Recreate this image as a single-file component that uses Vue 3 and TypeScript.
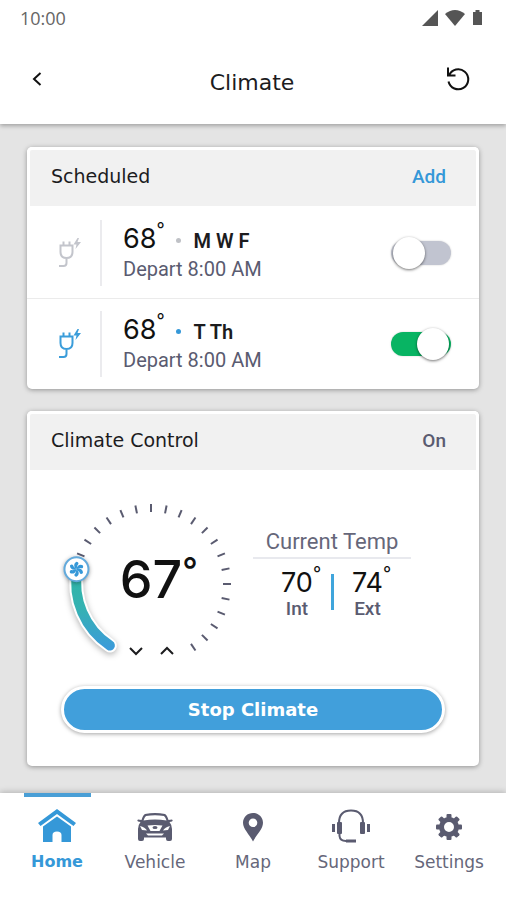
<script setup lang="ts">
import { ref, computed } from 'vue'

interface Schedule {
  id: number
  temp: number
  days: string
  depart: string
  on: boolean
}

const schedules = ref<Schedule[]>([
  { id: 1, temp: 68, days: 'M W F', depart: '8:00 AM', on: false },
  { id: 2, temp: 68, days: 'T Th', depart: '8:00 AM', on: true },
])

const running = ref(true)

// The dial has 27 stops, 11.25 degrees apart, from the lower left to the lower right.
const STEP = 11.25
const START = -146.25
const MIN_TEMP = 61
const MAX_TEMP = 87
const target = ref(67)

const cx = 90
const cy = 88

function polar(angle: number, radius: number) {
  const a = (angle * Math.PI) / 180
  return { x: cx + radius * Math.sin(a), y: cy - radius * Math.cos(a) }
}

const knobAngle = computed(() => START + (target.value - MIN_TEMP) * STEP)
const knob = computed(() => polar(knobAngle.value, 76))

const ticks = computed(() => {
  const list = []
  for (let t = target.value + 1; t <= MAX_TEMP; t++) {
    const a = START + (t - MIN_TEMP) * STEP
    const p = polar(a, 72)
    const q = polar(a, 80)
    list.push({ t, x1: p.x, y1: p.y, x2: q.x, y2: q.y })
  }
  return list
})

const arc = computed(() => {
  const s = polar(START, 74)
  const e = polar(knobAngle.value, 75)
  const large = knobAngle.value - START > 180 ? 1 : 0
  return `M${s.x} ${s.y}A75 75 0 ${large} 1 ${e.x} ${e.y}`
})

function change(by: number) {
  target.value = Math.min(MAX_TEMP, Math.max(MIN_TEMP, target.value + by))
}

const teeth = [0, 45, 90, 135, 180, 225, 270, 315]
const blades = [0, 60, 120, 180, 240, 300]
</script>

<template>
  <div class="app">
    <header class="top">
      <div class="status">
        <span>10:00</span>
        <svg class="signals" viewBox="0 0 62 18" aria-hidden="true">
          <path d="M0 17L16 1V17Z" />
          <path d="M23 5Q33-3 43 5L33 17Z" />
          <path d="M51 3H53.500V1H57.500V3H60V16H51Z" />
        </svg>
      </div>
      <div class="title-bar">
        <button class="icon-button" type="button" aria-label="Back">
          <svg class="back" viewBox="0 0 14 18"><path d="M10.500 3L4 9L10.500 15" /></svg>
        </button>
        <h1>Climate</h1>
        <button class="icon-button" type="button" aria-label="Refresh">
          <svg class="refresh" viewBox="0 0 26 26">
            <path d="M3.500 15.500A10 10 0 1 0 4 9.500M3 1.500V9.500H10.500" />
          </svg>
        </button>
      </div>
    </header>

    <main class="content">
      <section class="card">
        <div class="card-head">
          <h2>Scheduled</h2>
          <button class="add" type="button">Add</button>
        </div>
        <ul class="schedules">
          <li v-for="s in schedules" :key="s.id" class="schedule" :class="{ active: s.on }">
            <svg class="plug" viewBox="0 0 26 32" aria-hidden="true">
              <path d="M3.500 8.500H15.500V15Q15.500 21 9.500 21Q3.500 21 3.500 15ZM6.500 8V4.500M12.500 8V4.500M9.500 21V26Q9.500 29 6.500 29H2" />
              <path class="bolt" d="M20.500 1L16.500 7.500H19.500L18.500 12L24 5H20.500L22 1Z" />
            </svg>
            <div class="schedule-text">
              <div class="schedule-line">
                <span class="temp">{{ s.temp }}<span class="degree">°</span></span>
                <i class="dot"></i>
                <b>{{ s.days }}</b>
              </div>
              <div class="depart">Depart {{ s.depart }}</div>
            </div>
            <input
              v-model="s.on"
              class="switch"
              type="checkbox"
              role="switch"
              :aria-label="`${s.days} departure`"
            />
          </li>
        </ul>
      </section>

      <section class="card">
        <div class="card-head">
          <h2>Climate Control</h2>
          <span class="state">{{ running ? 'On' : 'Off' }}</span>
        </div>
        <div class="climate">
          <div class="readings">
            <div class="dial">
              <svg class="ring" viewBox="0 0 180 168" aria-hidden="true">
                <defs>
                  <linearGradient id="arc-fill" x1="0" y1="72" x2="0" y2="152" gradientUnits="userSpaceOnUse">
                    <stop offset="0" stop-color="#2fb5a4" />
                    <stop offset="0.5" stop-color="#35b2b2" />
                    <stop offset="1" stop-color="#3b9bd9" />
                  </linearGradient>
                </defs>
                <line v-for="k in ticks" :key="k.t" class="tick" :x1="k.x1" :y1="k.y1" :x2="k.x2" :y2="k.y2" />
                <path class="arc-edge" :d="arc" />
                <path class="arc" :d="arc" stroke="url(#arc-fill)" />
                <g :transform="`translate(${knob.x} ${knob.y})`">
                  <circle class="knob" r="12" />
                  <path
                    v-for="b in blades"
                    :key="b"
                    class="blade"
                    d="M0 0C-3-2-3-6 0-7.500C2.500-7 2.500-5 1-4Z"
                    :transform="`rotate(${b})`"
                  />
                </g>
              </svg>
              <input
                v-model.number="target"
                class="dial-range"
                type="range"
                :min="MIN_TEMP"
                :max="MAX_TEMP"
                aria-label="Target temperature"
              />
              <div class="target">{{ target }}<span class="target-degree">°</span></div>
              <div class="steps">
                <button type="button" aria-label="Lower temperature" @click="change(-1)">
                  <svg viewBox="0 0 16 12"><path d="M2 3L8 9L14 3" /></svg>
                </button>
                <button type="button" aria-label="Raise temperature" @click="change(1)">
                  <svg viewBox="0 0 16 12"><path d="M2 9L8 3L14 9" /></svg>
                </button>
              </div>
            </div>

            <div class="current">
              <h3>Current Temp</h3>
              <div class="pair">
                <div class="reading">
                  <span class="temp">70<span class="degree">°</span></span>
                  <span class="place">Int</span>
                </div>
                <i class="bar"></i>
                <div class="reading">
                  <span class="temp">74<span class="degree">°</span></span>
                  <span class="place">Ext</span>
                </div>
              </div>
            </div>
          </div>
          <button class="stop" type="button" @click="running = !running">
            {{ running ? 'Stop Climate' : 'Start Climate' }}
          </button>
        </div>
      </section>
    </main>

    <nav class="tabs">
      <a class="tab current-tab" href="#home" aria-current="page">
        <svg viewBox="0 0 40 36" aria-hidden="true">
          <path d="M20 1L39 15L36.500 18L20 6L3.500 18L1 15Z" />
          <path d="M20 8.500L34 18.500V34H24.500V27Q24.500 23.500 20 23.500Q15.500 23.500 15.500 27V34H6V18.500Z" />
        </svg>
        Home
      </a>
      <a class="tab" href="#vehicle">
        <svg viewBox="0 0 40 36" aria-hidden="true">
          <path
            fill-rule="evenodd"
            d="M10 6Q20 4 30 6Q32 7 33.500 12L37 11.500Q38.500 12.500 37 13.500L34.500 14Q37 17 37 21V31Q37 33 35 33H33Q31 33 31 31V29.500H9V31Q9 33 7 33H5Q3 33 3 31V21Q3 17 5.500 14L3 13.500Q1.500 12.500 3 11.500L6.500 12Q8 7 10 6ZM11 8Q9.500 9 8.500 12.500Q20 10.500 31.500 12.500Q30.500 9 29 8Q20 6.500 11 8ZM5 18L7 22L12 22.500Q10 19 5 18ZM35 18L33 22L28 22.500Q30 19 35 18ZM12.500 17.500L15.500 23H24.500L27.500 17.500Q20 16.500 12.500 17.500ZM11 25.500L13 27.500H27L29 25.500Z"
          />
          <ellipse cx="20" cy="19.500" rx="2.500" ry="1.500" />
        </svg>
        Vehicle
      </a>
      <a class="tab" href="#map">
        <svg viewBox="0 0 40 36" aria-hidden="true">
          <path
            fill-rule="evenodd"
            d="M20 5C14.500 5 10 9.200 10 14.800C10 21 16 26 20 33.500C24 26 30 21 30 14.800C30 9.200 25.500 5 20 5ZM20 10.500A4.300 4.300 0 1 1 20 19.100A4.300 4.300 0 1 1 20 10.500Z"
          />
        </svg>
        Map
      </a>
      <a class="tab" href="#support">
        <svg viewBox="0 0 40 36" aria-hidden="true">
          <path class="wire" d="M8 15C8 6 13 2.500 20 2.500C27 2.500 32 6 32 15M8.500 24V28Q9 33 15 33" />
          <rect x="6" y="14" width="5" height="12" rx="1" />
          <rect x="29" y="14" width="5" height="12" rx="1" />
          <rect x="1" y="16" width="3" height="8" />
          <rect x="36" y="16" width="3" height="8" />
          <rect x="15" y="31.500" width="10" height="3" />
        </svg>
        Support
      </a>
      <a class="tab" href="#settings">
        <svg viewBox="0 0 40 36" aria-hidden="true">
          <circle class="gear" cx="20" cy="19" r="7.500" />
          <rect
            v-for="t in teeth"
            :key="t"
            x="17.500"
            y="6"
            width="5"
            height="5"
            rx="1"
            :transform="`rotate(${t} 20 19)`"
          />
        </svg>
        Settings
      </a>
    </nav>
  </div>
</template>

<style>
body {
  margin: 0;
}
</style>

<style scoped>
.app {
  display: flex;
  flex-direction: column;
  min-height: 100vh;
  background: #e4e4e4;
  color: #1c1c1e;
  font-family: "DejaVu Sans", sans-serif;
}

h1,
h2,
h3,
ul {
  margin: 0;
  padding: 0;
  font-weight: 400;
  list-style: none;
}

button {
  padding: 0;
  border: 0;
  background: none;
  color: inherit;
  font: inherit;
  cursor: pointer;
}

svg {
  display: block;
}

/* Top bar */
.top {
  height: 124px;
  background: #fff;
  box-shadow: 0 2px 4px rgba(0, 0, 0, 0.28);
}

.status {
  display: flex;
  align-items: center;
  justify-content: space-between;
  height: 36px;
  padding: 0 22px 0 20px;
  color: #666;
  font: 400 18px "Open Sans", sans-serif;
}

.signals {
  width: 62px;
  height: 18px;
  fill: #555;
}

.title-bar {
  display: grid;
  grid-template-columns: 48px 1fr 48px;
  align-items: center;
  justify-items: center;
  height: 86px;
  padding: 0 24px 0 13px;
}

.title-bar h1 {
  padding: 8px 0 0 9px;
  font-size: 22px;
  line-height: 28px;
}

.icon-button {
  display: grid;
  place-items: center;
  width: 30px;
  height: 30px;
}

.back {
  width: 14px;
  height: 18px;
}

.refresh {
  width: 26px;
  height: 26px;
}

.back path,
.refresh path {
  fill: none;
  stroke: #111;
  stroke-width: 2;
}

/* Cards */
.content {
  flex: 1;
  display: flex;
  flex-direction: column;
  gap: 22px;
  padding: 23px 27px 27px;
}

.card {
  border-radius: 5px;
  background: #fff;
  box-shadow: 0 1px 5px rgba(0, 0, 0, 0.36);
}

.card-head {
  display: flex;
  align-items: center;
  justify-content: space-between;
  height: 59px;
  padding: 0 30px 4px 21px;
  box-sizing: border-box;
  border: 3px solid #fff;
  border-bottom: 0;
  border-radius: 5px 5px 0 0;
  background: #f1f1f1;
}

.card-head h2 {
  font-size: 19px;
}

.add,
.state {
  font: 500 19px Roboto, sans-serif;
}

.add {
  color: #3598d8;
}

.state {
  color: #5a5b70;
}

/* Schedules */
.schedules {
  padding-top: 2px;
}

.schedule {
  display: flex;
  align-items: center;
  height: 90px;
  padding: 0 28px 0 30px;
}

.schedule + .schedule {
  border-top: 1px solid #ebebeb;
}

.plug {
  width: 26px;
  height: 32px;
  fill: none;
  stroke: #c3c5cc;
  stroke-width: 2;
}

.bolt {
  fill: #c3c5cc;
  stroke: none;
}

.active .plug {
  stroke: #3b9dda;
}

.active .bolt {
  fill: #3b9dda;
}

.schedule-text {
  flex: 1;
  margin-left: 17px;
  padding: 3px 0 3px 21px;
  border-left: 2px solid #ebebee;
}

.schedule-line {
  display: flex;
  align-items: center;
  height: 32px;
}

.temp {
  position: relative;
  color: #111;
  font: 400 27px/28px Inter, sans-serif;
}

.degree {
  position: absolute;
  left: 100%;
  top: -9px;
  font-size: 18px;
}

.dot {
  width: 5px;
  height: 5px;
  margin: 3px 12px 0 20px;
  border-radius: 50%;
  background: #bfc1c6;
}

.active .dot {
  background: #3598d8;
}

.schedule-line b {
  padding-top: 4px;
  font: 600 20px/24px Roboto, sans-serif;
}

.depart {
  color: #5a5b70;
  font: 400 20px/28px Roboto, sans-serif;
}

.switch {
  appearance: none;
  display: flex;
  align-items: center;
  width: 60px;
  height: 24px;
  margin: 0;
  padding: 0 2px;
  border-radius: 12px;
  background: #c1c4d0;
  box-shadow: 0 0 2px rgba(0, 0, 0, 0.2);
  cursor: pointer;
}

.switch::before {
  content: "";
  width: 32px;
  height: 32px;
  border-radius: 50%;
  background: #fff;
  box-shadow: 0 1px 3px rgba(0, 0, 0, 0.55);
}

.switch:checked {
  justify-content: flex-end;
  background: #08b463;
}

/* Climate control */
.climate {
  display: flex;
  flex-direction: column;
  gap: 22px;
  padding: 26px 34px 33px;
}

.readings {
  display: flex;
  gap: 12px;
}

.dial {
  display: grid;
  flex: none;
  width: 180px;
  height: 168px;
}

.dial > * {
  grid-area: 1 / 1;
}

.ring {
  width: 180px;
  height: 168px;
  overflow: visible;
}

.tick {
  stroke: #5a5b70;
  stroke-width: 2;
}

.arc,
.arc-edge {
  fill: none;
  stroke-width: 10;
  stroke-linecap: round;
}

.arc-edge {
  stroke: #fff;
  stroke-width: 14;
  filter: drop-shadow(0 2px 3px rgba(0, 0, 0, 0.3));
}

.knob {
  fill: #fff;
  stroke: #62aadc;
  stroke-width: 2;
  filter: drop-shadow(0 1px 2px rgba(0, 0, 0, 0.35));
}

.blade {
  fill: #3598d8;
}

.dial-range {
  width: 100%;
  height: 100%;
  margin: 0;
  opacity: 0;
}

.target {
  position: relative;
  place-self: center;
  color: #111;
  font: 500 52px/60px Inter, sans-serif;
}

.target-degree {
  position: absolute;
  left: 100%;
  top: -10px;
  font-size: 34px;
}

.steps {
  display: flex;
  place-self: end center;
}

.steps button {
  display: grid;
  place-items: center;
  width: 31px;
  height: 26px;
}

.steps svg {
  width: 16px;
  height: 12px;
  fill: none;
  stroke: #1c1c1e;
  stroke-width: 2;
}

.current {
  flex: 0 1 158px;
  padding-top: 32px;
}

.current h3 {
  padding-bottom: 2px;
  border-bottom: 2px solid #e8e9ee;
  color: #66677a;
  font: 400 22px/27px Roboto, sans-serif;
  text-align: center;
}

.pair {
  display: flex;
  justify-content: center;
  gap: 18px;
  padding-top: 10px;
}

.reading {
  display: flex;
  flex-direction: column;
  align-items: center;
}

.place {
  color: #5a5b70;
  font: 500 19px/24px Roboto, sans-serif;
}

.bar {
  width: 3px;
  height: 36px;
  margin-top: 5px;
  background: #3fa5dc;
}

.stop {
  height: 47px;
  border: 3px solid #fff;
  border-radius: 24px;
  background: #419fdb;
  box-shadow: 0 1px 4px rgba(0, 0, 0, 0.36);
  color: #fff;
  font-size: 18px;
  font-weight: 700;
}

/* Tabs */
.tabs {
  display: grid;
  grid-template-columns: repeat(5, 1fr);
  height: 107px;
  padding: 0 8px;
  background: #fff;
  box-shadow: 0 -1px 6px rgba(0, 0, 0, 0.22);
}

.tab {
  display: flex;
  flex-direction: column;
  align-items: center;
  gap: 6px;
  color: #66677a;
  font-size: 17px;
  line-height: 24px;
  text-decoration: none;
}

.tab::before {
  content: "";
  width: 67px;
  height: 4px;
}

.tab svg {
  width: 40px;
  height: 36px;
  margin-top: 5px;
  fill: #5a5b70;
}

.current-tab {
  color: #3598d8;
  font-size: 16px;
  font-weight: 700;
}

.current-tab::before {
  background: #4a9fd6;
}

.current-tab svg {
  fill: #3598d8;
}

.wire {
  fill: none;
  stroke: #5a5b70;
  stroke-width: 2;
}

.gear {
  fill: none;
  stroke: #5a5b70;
  stroke-width: 5;
}
</style>
